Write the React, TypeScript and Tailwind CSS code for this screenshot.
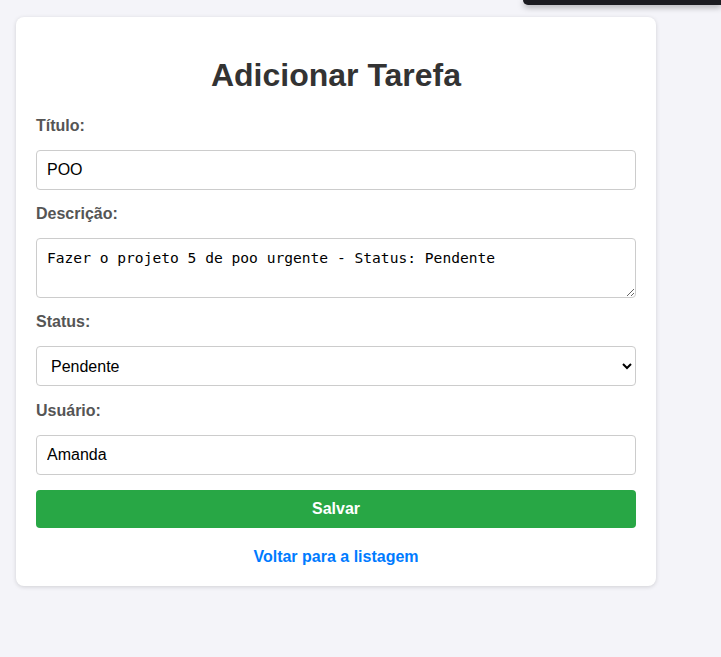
const fieldClass =
  "block w-full border border-[#ccc] rounded-[4px] bg-white px-[10px] py-[10px] text-[16px] leading-[18px] text-black";

const labelClass = "block text-[16px] leading-[18px] font-bold text-[#555] mb-[15px]";

const App = () => {
  return (
    <div className="relative min-h-[657px] bg-[#f4f4f9] pl-[16px] pt-[17px] font-['Liberation_Sans',Arial,sans-serif]">
      <div className="absolute right-0 top-0 h-[5px] w-[198px] rounded-bl-[10px] bg-[#1c1c21] shadow-[0_2px_6px_rgba(0,0,0,0.35)]" />
      <div className="w-[640px] rounded-[8px] bg-white p-[20px] shadow-[0_1px_4px_rgba(0,0,0,0.15)]">
        <h2 className="mt-[20px] mb-[23px] text-center text-[32px] leading-[37px] font-bold text-[#333]">
          Adicionar Tarefa
        </h2>
        <form autoComplete="off" onSubmit={(e) => e.preventDefault()}>
          <label className={labelClass} htmlFor="titulo">
            Título:
          </label>
          <input className={`${fieldClass} h-[40px] mb-[15px]`} type="text" id="titulo" defaultValue="POO" />

          <label className={labelClass} htmlFor="descricao">
            Descrição:
          </label>
          <textarea
            className="block w-full h-[60px] border border-[#ccc] rounded-[4px] bg-white px-[10px] py-[10px] text-[14.6px] leading-[18px] text-black mb-[15px] font-['DejaVu_Sans_Mono',monospace]"
            id="descricao"
            defaultValue="Fazer o projeto 5 de poo urgente - Status: Pendente"
          />

          <label className={labelClass} htmlFor="status">
            Status:
          </label>
          <select className={`${fieldClass} h-[40px] py-0 mb-[16px]`} id="status" defaultValue="Pendente">
            <option value="Pendente">Pendente</option>
            <option value="Em andamento">Em andamento</option>
            <option value="Concluída">Concluída</option>
          </select>

          <label className={labelClass} htmlFor="usuario">
            Usuário:
          </label>
          <input className={`${fieldClass} h-[40px] mb-[15px]`} type="text" id="usuario" defaultValue="Amanda" />

          <button className="block w-full h-[38px] rounded-[4px] bg-[#28a745] text-[16px] font-bold text-white">
            Salvar
          </button>
        </form>
        <div className="mt-[20px] text-center text-[16px] leading-[18px]">
          <a className="font-bold text-[#007bff]" href="#">
            Voltar para a listagem
          </a>
        </div>
      </div>
    </div>
  );
};

export default App;
